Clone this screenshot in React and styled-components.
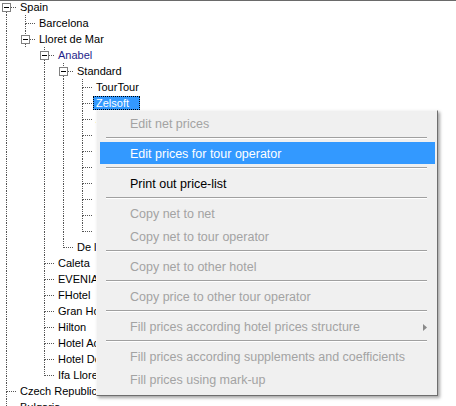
import React from 'react';
import styled, { createGlobalStyle } from 'styled-components';

const Global = createGlobalStyle`
  html, body { margin: 0; padding: 0; overflow: hidden; background: #fff; }
  #root { width: 456px; height: 406px; }
`;

const View = styled.div`
  position: relative;
  width: 456px;
  height: 406px;
  box-sizing: border-box;
  overflow: hidden;
  background: #fff;
  border-top: 1px solid #6a6a6a;
  font-family: "Liberation Sans", Arial, sans-serif;
`;

const TreeList = styled.ul`
  list-style: none;
  margin: -2px 0 0;
  padding: 0;
`;

const Row = styled.li`
  display: flex;
  align-items: flex-start;
  height: 16px;
  white-space: nowrap;
`;

const Label = styled.span`
  margin-top: 1px;
  height: 12px;
  line-height: 12px;
  padding: 0 ${(p) => (p.$selected ? '10px' : '2px')} 0 2px;
  border: 1px ${(p) => (p.$selected ? 'dotted #000' : 'solid transparent')};
  background: ${(p) => (p.$selected ? '#3399ff' : 'transparent')};
  color: ${(p) => (p.$selected ? '#fff' : p.$tone === 'link' ? '#1f1f8c' : '#000')};
  font-size: 11px;
`;

const GuideSvg = styled.svg`
  display: block;
  flex: none;
`;

const LINE = '#555';

function Guide({ width = 19, up, down, across, box }) {
  const x = 6.5;
  const y = 8.5;
  return (
    <GuideSvg width={width} height={16} viewBox={`0 0 ${width} 16`} shapeRendering="crispEdges">
      {up && <line x1={x} y1={0} x2={x} y2={box ? 4 : y} stroke={LINE} strokeDasharray="1 1" />}
      {down && <line x1={x} y1={box ? 13 : y} x2={x} y2={16} stroke={LINE} strokeDasharray="1 1" />}
      {across && <line x1={box ? 11 : 7} y1={y} x2={width} y2={y} stroke={LINE} strokeDasharray="1 1" />}
      {box && (
        <>
          <rect x={2.5} y={4.5} width={8} height={8} fill="#fff" stroke="#808080" />
          <line x1={4} y1={y} x2={9} y2={y} stroke="#000" />
          {box === 'plus' && <line x1={x} y1={6} x2={x} y2={11} stroke="#000" />}
        </>
      )}
    </GuideSvg>
  );
}

const hidden = ['Alltours', 'Bravo Tours', 'Centrum', 'Delta Travel', 'Exim Tours', 'Firo Tour', 'Globus', 'Hotelplan'];

const tree = [
  {
    name: 'Spain',
    expanded: true,
    children: [
      { name: 'Barcelona' },
      {
        name: 'Lloret de Mar',
        expanded: true,
        children: [
          {
            name: 'Anabel',
            tone: 'link',
            expanded: true,
            children: [
              {
                name: 'Standard',
                expanded: true,
                children: [
                  { name: 'TourTour' },
                  { name: 'Zelsoft', selected: true },
                  ...hidden.map((n) => ({ name: n })),
                ],
              },
              { name: 'De luxe' },
            ],
          },
          { name: 'Caleta' },
          { name: 'EVENIA Olympic Park' },
          { name: 'FHotel' },
          { name: 'Gran Hotel Monterrey' },
          { name: 'Hilton' },
          { name: 'Hotel Acapulco' },
          { name: 'Hotel Don Juan' },
          { name: 'Ifa Lloret' },
        ],
      },
    ],
  },
  { name: 'Czech Republic' },
  { name: 'Bulgaria' },
  { name: 'Croatia' },
];

function flatten(nodes, ancestors = [], out = [], root = true) {
  nodes.forEach((n, i) => {
    const last = i === nodes.length - 1;
    out.push({ node: n, ancestors, last, first: root && i === 0 });
    if (n.children && n.expanded) flatten(n.children, [...ancestors, !last], out, false);
  });
  return out;
}

const rows = flatten(tree);

const Menu = styled.ul`
  position: absolute;
  left: 96px;
  top: 109px;
  width: 342px;
  box-sizing: border-box;
  display: flex;
  flex-direction: column;
  margin: 0;
  padding: 1px 2px 4px 3px;
  list-style: none;
  background: #f0f0f0;
  border: 1px solid;
  border-color: #f6f6f6 #6e6e6e #6e6e6e #f6f6f6;
  box-shadow: 2px 2px 3px rgba(0, 0, 0, 0.35);
  font-family: "Liberation Sans", Arial, sans-serif;
`;

const Item = styled.li`
  display: flex;
  align-items: center;
  flex: none;
  height: 22px;
  margin-bottom: 1px;
  padding: 2px 8px 0 30px;
  box-sizing: border-box;
  font-size: 12.5px;
  white-space: nowrap;
  color: ${(p) => (p.$active ? '#fff' : p.$disabled ? '#a3a3a3' : '#000')};
  background: ${(p) => (p.$active ? '#3399ff' : 'transparent')};
`;

const Separator = styled.li`
  flex: none;
  height: 1px;
  margin: 2px 8px 3px 6px;
  background: #a0a0a0;
  border-bottom: 1px solid #fff;
`;

const Arrow = styled.svg`
  margin-left: auto;
  display: block;
`;

const menu = [
  { label: 'Edit net prices', disabled: true },
  'sep',
  { label: 'Edit prices for tour operator', active: true },
  'sep',
  { label: 'Print out price-list' },
  'sep',
  { label: 'Copy net to net', disabled: true },
  { label: 'Copy net to tour operator', disabled: true },
  'sep',
  { label: 'Copy net to other hotel', disabled: true },
  'sep',
  { label: 'Copy price to other tour operator', disabled: true },
  'sep',
  { label: 'Fill prices according hotel prices structure', disabled: true, submenu: true },
  'sep',
  { label: 'Fill prices according supplements and coefficients', disabled: true },
  { label: 'Fill prices using mark-up', disabled: true },
];

export default function App() {
  return (
    <>
      <Global />
      <View>
        <TreeList>
          {rows.map(({ node, ancestors, last, first }, i) => {
            const hasBox = node.children && node.children.length > 0;
            return (
              <Row key={i}>
                {ancestors.map((more, j) => (
                  <Guide key={j} up={more} down={more} />
                ))}
                <Guide
                  width={17}
                  up={!first}
                  down={!last || (hasBox && node.expanded)}
                  across
                  box={hasBox ? (node.expanded ? 'minus' : 'plus') : null}
                />
                <Label $selected={node.selected} $tone={node.tone}>
                  {node.name}
                </Label>
              </Row>
            );
          })}
        </TreeList>
        <Menu>
          {menu.map((m, i) =>
            m === 'sep' ? (
              <Separator key={i} />
            ) : (
              <Item key={i} $disabled={m.disabled} $active={m.active}>
                {m.label}
                {m.submenu && (
                  <Arrow width="4" height="7" viewBox="0 0 4 7">
                    <path d="M0 0 L4 3.5 L0 7 Z" fill="#8a8a8a" />
                  </Arrow>
                )}
              </Item>
            )
          )}
        </Menu>
      </View>
    </>
  );
}
